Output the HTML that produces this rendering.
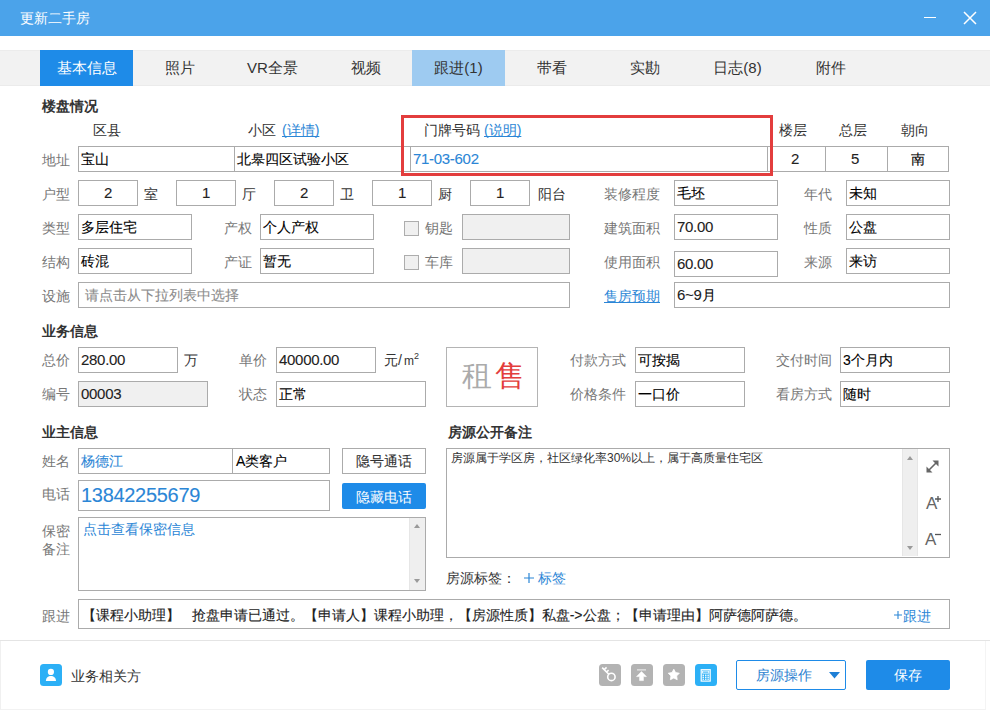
<!DOCTYPE html>
<html><head><meta charset="utf-8">
<style>
*{box-sizing:border-box;margin:0;padding:0}
html,body{width:990px;height:710px;overflow:hidden;background:#fff;font-family:"Liberation Sans",sans-serif;font-size:14px;color:#222}
.a{position:absolute;white-space:nowrap}
.t{position:absolute;white-space:nowrap;line-height:20px;height:20px}
.lb{color:#777}
.hd{font-weight:bold;color:#333}
.lk{color:#2b86d6;text-decoration:underline;text-decoration-skip-ink:none}
.in{position:absolute;border:1px solid #ababab;background:#fff;line-height:24px;padding-left:2px;white-space:nowrap;overflow:hidden;color:#000;-webkit-text-stroke:0.1px currentColor}
.n{font-size:15px;letter-spacing:-0.3px;color:#222}
.dis{background:#f0f0f0}
.c{text-align:center;padding-left:0}
</style></head><body>
<!-- title bar -->
<div class="a" style="left:0;top:0;width:990px;height:36px;background:#4ba3ea"></div>
<div class="t" style="left:20px;top:8px;color:#fff;font-size:14px">更新二手房</div>
<div class="a" style="left:924px;top:17px;width:12px;height:1px;background:#fff"></div>
<svg class="a" style="left:963px;top:11px" width="14" height="14" viewBox="0 0 14 14"><path d="M1 1L13 13M13 1L1 13" stroke="#fff" stroke-width="1.5"/></svg>

<!-- tabs -->
<div class="a" style="left:0;top:50px;width:990px;height:36px;background:#f2f2f2;border-top:1px solid #ececec;border-bottom:1px solid #ebebeb"></div>
<div class="a" style="left:40px;top:50px;width:93px;height:36px;background:#1e8be8"></div>
<div class="a" style="left:412px;top:50px;width:93px;height:36px;background:#9ecbf1"></div>
<div class="t" style="left:40px;top:58px;width:93px;text-align:center;font-size:15px;color:#fff">基本信息</div>
<div class="t" style="left:133px;top:58px;width:93px;text-align:center;font-size:15px;color:#333">照片</div>
<div class="t" style="left:226px;top:58px;width:93px;text-align:center;font-size:15px;color:#333">VR全景</div>
<div class="t" style="left:319px;top:58px;width:93px;text-align:center;font-size:15px;color:#333">视频</div>
<div class="t" style="left:412px;top:58px;width:93px;text-align:center;font-size:15px;color:#333">跟进(1)</div>
<div class="t" style="left:505px;top:58px;width:93px;text-align:center;font-size:15px;color:#333">带看</div>
<div class="t" style="left:598px;top:58px;width:93px;text-align:center;font-size:15px;color:#333">实勘</div>
<div class="t" style="left:691px;top:58px;width:93px;text-align:center;font-size:15px;color:#333">日志(8)</div>
<div class="t" style="left:784px;top:58px;width:93px;text-align:center;font-size:15px;color:#333">附件</div>

<!-- 楼盘情况 -->
<div class="t hd" style="left:42px;top:96px">楼盘情况</div>
<div class="t" style="left:93px;top:120px;color:#333">区县</div>
<div class="t" style="left:248px;top:120px;color:#333">小区</div><div class="t lk" style="left:282px;top:120px">(详情)</div>
<div class="t" style="left:424px;top:120px;color:#333">门牌号码</div><div class="t lk" style="left:484px;top:120px">(说明)</div>
<div class="t" style="left:779px;top:120px;color:#333">楼层</div>
<div class="t" style="left:839px;top:120px;color:#333">总层</div>
<div class="t" style="left:901px;top:120px;color:#333">朝向</div>

<div class="t lb" style="left:42px;top:150px">地址</div>
<div class="in" style="left:78px;top:146px;width:157px;height:26px">宝山</div>
<div class="in" style="left:234px;top:146px;width:177px;height:26px;padding-left:2px">北皋四区试验小区</div>
<div class="in" style="left:410px;top:146px;width:358px;height:26px;color:#2b86d6;padding-left:2px"><span class="n" style="color:#2b86d6">71-03-602</span></div>
<div class="in c" style="left:767px;top:146px;width:59px;height:26px;padding-right:3px"><span class="n">2</span></div>
<div class="in c" style="left:825px;top:146px;width:63px;height:26px;padding-right:3px"><span class="n">5</span></div>
<div class="in c" style="left:887px;top:146px;width:62px;height:26px">南</div>
<div class="a" style="left:401px;top:115px;width:372px;height:61px;border:3px solid #e33d3d"></div>


<!-- row 2 -->
<div class="t lb" style="left:42px;top:184px">户型</div>
<div class="in c" style="left:78px;top:180px;width:60px;height:26px"><span class="n">2</span></div>
<div class="t" style="left:144px;top:184px;color:#333">室</div>
<div class="in c" style="left:176px;top:180px;width:60px;height:26px"><span class="n">1</span></div>
<div class="t" style="left:242px;top:184px;color:#333">厅</div>
<div class="in c" style="left:274px;top:180px;width:60px;height:26px"><span class="n">2</span></div>
<div class="t" style="left:340px;top:184px;color:#333">卫</div>
<div class="in c" style="left:372px;top:180px;width:60px;height:26px"><span class="n">1</span></div>
<div class="t" style="left:438px;top:184px;color:#333">厨</div>
<div class="in c" style="left:470px;top:180px;width:60px;height:26px"><span class="n">1</span></div>
<div class="t" style="left:538px;top:184px;color:#333">阳台</div>
<div class="t lb" style="left:604px;top:184px">装修程度</div>
<div class="in" style="left:674px;top:180px;width:104px;height:26px">毛坯</div>
<div class="t lb" style="left:804px;top:184px">年代</div>
<div class="in" style="left:846px;top:180px;width:104px;height:26px">未知</div>

<!-- row 3 -->
<div class="t lb" style="left:42px;top:218px">类型</div>
<div class="in" style="left:78px;top:214px;width:114px;height:26px">多层住宅</div>
<div class="t lb" style="left:224px;top:218px">产权</div>
<div class="in" style="left:260px;top:214px;width:114px;height:26px">个人产权</div>
<div class="a" style="left:404px;top:221px;width:15px;height:15px;border:1px solid #adadad;background:#f0f0f0"></div>
<div class="t lb" style="left:425px;top:218px">钥匙</div>
<div class="in dis" style="left:462px;top:214px;width:108px;height:26px"></div>
<div class="t lb" style="left:604px;top:218px">建筑面积</div>
<div class="in" style="left:674px;top:214px;width:104px;height:26px"><span class="n">70.00</span></div>
<div class="t lb" style="left:804px;top:218px">性质</div>
<div class="in" style="left:846px;top:214px;width:104px;height:26px">公盘</div>

<!-- row 4 -->
<div class="t lb" style="left:42px;top:252px">结构</div>
<div class="in" style="left:78px;top:248px;width:114px;height:26px">砖混</div>
<div class="t lb" style="left:224px;top:252px">产证</div>
<div class="in" style="left:260px;top:248px;width:114px;height:26px">暂无</div>
<div class="a" style="left:404px;top:255px;width:15px;height:15px;border:1px solid #adadad;background:#f0f0f0"></div>
<div class="t lb" style="left:425px;top:252px">车库</div>
<div class="in dis" style="left:462px;top:248px;width:108px;height:26px"></div>
<div class="t lb" style="left:604px;top:252px">使用面积</div>
<div class="in" style="left:674px;top:251px;width:104px;height:26px"><span class="n">60.00</span></div>
<div class="t lb" style="left:804px;top:252px">来源</div>
<div class="in" style="left:846px;top:248px;width:104px;height:26px">来访</div>

<!-- row 5 -->
<div class="t lb" style="left:42px;top:286px">设施</div>
<div class="in" style="left:78px;top:282px;width:492px;height:26px;color:#8c8c8c;padding-left:6px">请点击从下拉列表中选择</div>
<div class="t lk" style="left:604px;top:286px">售房预期</div>
<div class="in" style="left:674px;top:282px;width:276px;height:26px"><span class="n">6~9</span>月</div>

<!-- 业务信息 -->
<div class="t hd" style="left:42px;top:321px">业务信息</div>
<div class="t lb" style="left:42px;top:350px">总价</div>
<div class="in" style="left:78px;top:347px;width:100px;height:26px"><span class="n">280.00</span></div>
<div class="t" style="left:184px;top:350px;color:#333">万</div>
<div class="t lb" style="left:239px;top:350px">单价</div>
<div class="in" style="left:276px;top:347px;width:100px;height:26px"><span class="n">40000.00</span></div>
<div class="t" style="left:384px;top:350px;color:#333">元/<span style="font-size:12px;margin-left:2px">m</span><span style="font-size:9px;position:relative;top:-6px">2</span></div>
<div class="a" style="left:446px;top:347px;width:92px;height:60px;border:1px solid #b4b4b4"></div>
<div class="t" style="left:462px;top:364px;font-size:30px;line-height:24px;height:24px;color:#ababab">租</div>
<div class="t" style="left:495px;top:364px;font-size:30px;line-height:24px;height:24px;color:#e33d3d">售</div>
<div class="t lb" style="left:570px;top:350px">付款方式</div>
<div class="in" style="left:635px;top:347px;width:110px;height:26px">可按揭</div>
<div class="t lb" style="left:776px;top:350px">交付时间</div>
<div class="in" style="left:840px;top:347px;width:110px;height:26px">3个月内</div>

<div class="t lb" style="left:42px;top:384px">编号</div>
<div class="in dis" style="left:78px;top:381px;width:130px;height:26px"><span class="n">00003</span></div>
<div class="t lb" style="left:239px;top:384px">状态</div>
<div class="in" style="left:276px;top:381px;width:150px;height:26px">正常</div>
<div class="t lb" style="left:570px;top:384px">价格条件</div>
<div class="in" style="left:635px;top:381px;width:110px;height:26px">一口价</div>
<div class="t lb" style="left:776px;top:384px">看房方式</div>
<div class="in" style="left:840px;top:381px;width:110px;height:26px">随时</div>

<!-- 业主信息 -->
<div class="t hd" style="left:42px;top:422px">业主信息</div>
<div class="t lb" style="left:42px;top:451px">姓名</div>
<div class="in" style="left:78px;top:448px;width:155px;height:26px;color:#2b86d6">杨德江</div>
<div class="in" style="left:232px;top:448px;width:98px;height:26px;padding-left:3px">A类客户</div>
<div class="in c" style="left:342px;top:448px;width:84px;height:26px;color:#333">隐号通话</div>
<div class="t lb" style="left:42px;top:484px">电话</div>
<div class="in" style="left:78px;top:480px;width:252px;height:31px;line-height:29px;color:#2b86d6;font-size:20px;letter-spacing:-0.3px">13842255679</div>
<div class="a" style="left:342px;top:483px;width:84px;height:26px;background:#1e8be8;border-radius:2px;color:#fff;text-align:center;line-height:28px">隐藏电话</div>
<div class="t lb" style="left:42px;top:521px">保密</div>
<div class="t lb" style="left:42px;top:539px">备注</div>
<div class="a" style="left:78px;top:517px;width:348px;height:74px;border:1px solid #ababab"></div>
<div class="t" style="left:83px;top:519px;color:#2b86d6">点击查看保密信息</div>
<div class="a" style="left:409px;top:518px;width:16px;height:72px;background:#efefef;border-left:1px solid #e6e6e6"></div><svg class="a" style="left:414px;top:524px" width="6" height="4"><path d="M0 4L3 0L6 4Z" fill="#9a9a9a"/></svg><svg class="a" style="left:414px;top:579px" width="6" height="4"><path d="M0 0L3 4L6 0Z" fill="#9a9a9a"/></svg>

<!-- 房源公开备注 -->
<div class="t hd" style="left:448px;top:422px">房源公开备注</div>
<div class="a" style="left:446px;top:448px;width:504px;height:110px;border:1px solid #ababab"></div>
<div class="t" style="left:451px;top:448px;font-size:12px;color:#333">房源属于学区房，社区绿化率30%以上，属于高质量住宅区</div>
<div class="a" style="left:902px;top:449px;width:16px;height:107px;background:#efefef;border-left:1px solid #e6e6e6;border-right:1px solid #e6e6e6"></div><svg class="a" style="left:907px;top:456px" width="6" height="4"><path d="M0 4L3 0L6 4Z" fill="#9a9a9a"/></svg><svg class="a" style="left:907px;top:546px" width="6" height="4"><path d="M0 0L3 4L6 0Z" fill="#9a9a9a"/></svg>
<svg class="a" style="left:925px;top:459px" width="15" height="15" viewBox="0 0 15 15"><path d="M2.5 12.5L12.5 2.5" stroke="#666" stroke-width="1.6"/><path d="M7.5 1.5H13.5V7.5Z M1.5 7.5V13.5H7.5Z" fill="#666"/></svg>
<div class="t" style="left:926px;top:494px;font-size:17px;color:#666;line-height:20px">A</div><svg class="a" style="left:935px;top:496px" width="6" height="6"><path d="M3 0V6M0 3H6" stroke="#555" stroke-width="1.3"/></svg>
<div class="t" style="left:925px;top:530px;font-size:17px;color:#666;line-height:20px">A</div><svg class="a" style="left:935px;top:533px" width="6" height="3"><path d="M0 1.5H6" stroke="#555" stroke-width="1.3"/></svg>
<div class="t" style="left:446px;top:568px;color:#333">房源标签：</div>
<svg class="a" style="left:524px;top:573px" width="10" height="10"><path d="M5 0V10M0 5H10" stroke="#2b86d6" stroke-width="1.2"/></svg><div class="t" style="left:538px;top:568px;color:#2b86d6">标签</div>

<!-- 跟进 -->
<div class="t lb" style="left:42px;top:606px">跟进</div>
<div class="in" style="left:78px;top:599px;width:872px;height:30px;line-height:30px;padding-left:3px;color:#222">【课程小助理】&nbsp;&nbsp;&nbsp;抢盘申请已通过。【申请人】课程小助理，【房源性质】私盘-&gt;公盘；【申请理由】阿萨德阿萨德。</div>
<svg class="a" style="left:894px;top:611px" width="8" height="8"><path d="M4 0V8M0 4H8" stroke="#2b86d6" stroke-width="1.1"/></svg><div class="t" style="left:903px;top:606px;color:#2b86d6">跟进</div>

<!-- bottom -->
<div class="a" style="left:0;top:640px;width:990px;height:1px;background:#e4e4e4"></div><div class="a" style="left:0;top:641px;width:986px;height:69px;border-left:1px solid #f0f0f0;border-right:1px solid #f4f4f4;border-bottom:1px solid #f2f2f2"></div>
<svg class="a" style="left:40px;top:664px" width="22" height="22" viewBox="0 0 22 22"><rect width="22" height="22" rx="3.5" fill="#2cb0f6"/><circle cx="10.9" cy="7.9" r="3.1" fill="#fff"/><path d="M5.9 17C5.9 13.6 8.2 11.9 10.9 11.9S16 13.6 16 17Z" fill="#fff"/></svg>
<div class="t" style="left:71px;top:666px;color:#333">业务相关方</div>
<svg class="a" style="left:599px;top:664px" width="22" height="22" viewBox="0 0 22 22"><rect width="22" height="22" rx="3.5" fill="#b3b3b3"/><circle cx="12.4" cy="12.9" r="3.7" fill="none" stroke="#fff" stroke-width="1.6"/><path d="M9.8 10.2L3.2 3.6M5.2 5.6L7.6 3.4M7.6 8L9.6 6.2" stroke="#fff" stroke-width="1.6" fill="none"/></svg>
<svg class="a" style="left:631px;top:664px" width="22" height="22" viewBox="0 0 22 22"><rect width="22" height="22" rx="3.5" fill="#b3b3b3"/><rect x="6" y="5.4" width="9" height="1" fill="#fff" opacity="0.85"/><path d="M10.5 7.6L15.4 12.6H12.4V16.6H8.6V12.6H5.6Z" fill="#fff" stroke="#fff" stroke-width="0.6" stroke-linejoin="round"/></svg>
<svg class="a" style="left:663px;top:664px" width="22" height="22" viewBox="0 0 22 22"><rect width="22" height="22" rx="3.5" fill="#b3b3b3"/><path d="M10.80 5.20L12.56 8.57L16.32 9.21L13.65 11.93L14.21 15.69L10.80 14.00L7.39 15.69L7.95 11.93L5.28 9.21L9.04 8.57Z" stroke="#fff" stroke-width="0.8" stroke-linejoin="round" fill="#fff"/></svg>
<svg class="a" style="left:695px;top:664px" width="22" height="22" viewBox="0 0 22 22"><rect width="22" height="22" rx="3.5" fill="#2cb0f6"/><rect x="6.2" y="5.7" width="9" height="11.4" fill="none" stroke="#fff" stroke-width="1.2"/><rect x="7.6" y="7.1" width="6.2" height="2" fill="none" stroke="#fff" stroke-width="0.9"/><g fill="#fff"><rect x="7.5" y="10.6" width="1.5" height="1.3"/><rect x="10" y="10.6" width="1.5" height="1.3"/><rect x="12.4" y="10.6" width="1.5" height="1.3"/><rect x="7.5" y="12.6" width="1.5" height="1.3"/><rect x="10" y="12.6" width="1.5" height="1.3"/><rect x="12.4" y="12.6" width="1.5" height="1.3"/><rect x="7.5" y="14.6" width="1.5" height="1.2"/><rect x="10" y="14.6" width="1.5" height="1.2"/><rect x="12.4" y="14.6" width="1.5" height="1.2"/></g></svg>
<div class="a" style="left:736px;top:660px;width:110px;height:30px;border:1px solid #1e8be8;border-radius:2px"></div>
<div class="t" style="left:756px;top:665px;color:#2b7fd0;font-size:14px">房源操作</div>
<svg class="a" style="left:829px;top:672px" width="11" height="7"><path d="M0 0H11L5.5 6.5Z" fill="#1e7fd6"/></svg>
<div class="a" style="left:866px;top:660px;width:84px;height:30px;background:#1e8be8;border-radius:2px;color:#fff;text-align:center;line-height:30px;font-size:14px">保存</div>
</body></html>
